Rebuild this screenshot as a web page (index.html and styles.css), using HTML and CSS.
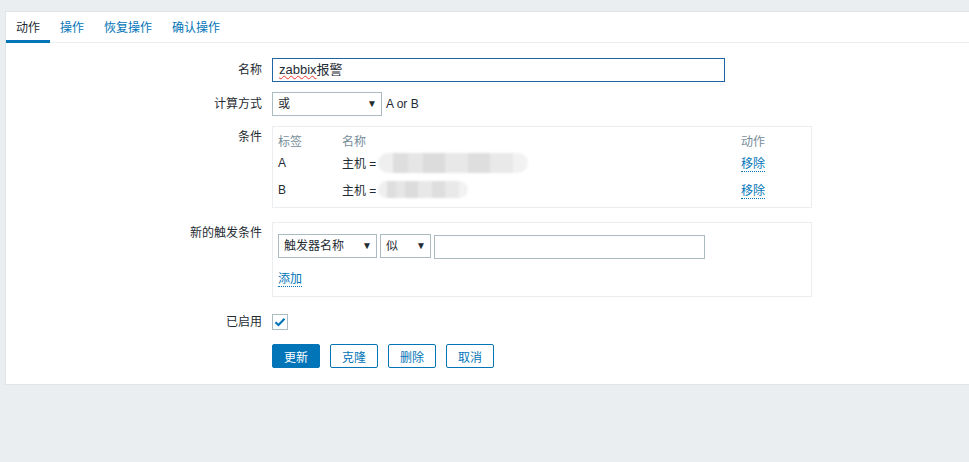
FILE: index.html
```html
<!DOCTYPE html>
<html lang="zh">
<head>
<meta charset="utf-8">
<title>动作</title>
<link rel="stylesheet" href="styles.css">
</head>
<body>
<div class="panel">
  <ul class="tabs">
    <li class="tab active">动作</li>
    <li class="tab">操作</li>
    <li class="tab">恢复操作</li>
    <li class="tab">确认操作</li>
  </ul>
  <div class="form">
    <div class="label">名称</div>
    <div class="field"><div class="input focused"><span class="spell">zabbix</span>报警</div></div>

    <div class="label">计算方式</div>
    <div class="field inline">
      <div class="select calc">或<span class="arrow">▼</span></div>
      <span class="hint">A or B</span>
    </div>

    <div class="label top">条件</div>
    <div class="field">
      <div class="box cond">
        <div class="trow head"><span class="c1">标签</span><span class="c2">名称</span><span class="c3">动作</span></div>
        <div class="trow"><span class="c1">A</span><span class="c2">主机 = <span class="blur wide"></span></span><span class="c3"><span class="link">移除</span></span></div>
        <div class="trow"><span class="c1">B</span><span class="c2">主机 = <span class="blur narrow"></span></span><span class="c3"><span class="link">移除</span></span></div>
      </div>
    </div>

    <div class="label top gap15">新的触发条件</div>
    <div class="field gap15">
      <div class="box trig">
        <div class="inline">
          <div class="select tname">触发器名称<span class="arrow">▼</span></div>
          <div class="select op">似<span class="arrow">▼</span></div>
          <div class="input value"></div>
        </div>
        <div class="addrow"><span class="link">添加</span></div>
      </div>
    </div>

    <div class="label gap13">已启用</div>
    <div class="field gap13">
      <div class="checkbox"><svg width="12" height="10" viewBox="0 0 12 10"><path d="M1.5 5.2 L4.5 8 L10.5 1.8" fill="none" stroke="#0275b8" stroke-width="2.2"/></svg></div>
    </div>

    <div class="label gap11"></div>
    <div class="field buttons gap11">
      <button class="btn primary">更新</button>
      <button class="btn">克隆</button>
      <button class="btn">删除</button>
      <button class="btn">取消</button>
    </div>
  </div>
</div>
</body>
</html>
```
FILE: styles.css
```css
html, body {
  margin: 0;
  padding: 0;
  overflow: hidden;
  background: #ebeef0;
}
body {
  font-family: "Liberation Sans", Arial, "Noto Sans CJK SC", sans-serif;
  font-size: 12px;
  color: #1f2c33;
  padding-top: 11px;
}
.panel {
  margin-left: 5px;
  width: 980px;
  height: 372px;
  background: #fff;
  border: 1px solid #dfe4e7;
}
.tabs {
  list-style: none;
  margin: 0;
  padding: 0;
  height: 30px;
  display: flex;
  border-bottom: 1px solid #ebeef0;
}
.tab {
  height: 31px;
  box-sizing: border-box;
  padding: 6px 10px 0;
  color: #0275b8;
  border-bottom: 3px solid transparent;
}
.tab.active {
  color: #1f2c33;
  border-bottom-color: #0275b8;
}
.form {
  display: grid;
  grid-template-columns: 256px 1fr;
  column-gap: 10px;
  row-gap: 10px;
  padding-top: 15px;
}
.label {
  text-align: right;
  line-height: 24px;
}
.label.top { line-height: 22px; }
.gap15 { margin-top: 4px; }
.gap13 { margin-top: 3px; }
.gap11 { margin-top: 0; }
.field { min-height: 24px; }
.inline {
  display: flex;
  align-items: center;
}
.input {
  box-sizing: border-box;
  height: 24px;
  border: 1px solid #acbbc2;
  padding: 0 6px;
  line-height: 22px;
  font-size: 13px;
  background: #fff;
}
.input.focused {
  width: 453px;
  border-color: #1f65a6;
}
.spell {
  text-decoration: underline wavy #e33;
  text-decoration-thickness: 1px;
}
.select {
  position: relative;
  box-sizing: border-box;
  height: 24px;
  border: 1px solid #acbbc2;
  padding: 0 5px;
  line-height: 22px;
  font-size: 12px;
}
.arrow {
  position: absolute;
  right: 4px;
  top: 0;
  font-size: 10px;
  color: #1f2c33;
}
.select.calc { width: 110px; }
.hint { margin-left: 4px; }
.box {
  box-sizing: border-box;
  width: 540px;
  border: 1px solid #ebeef0;
}
.cond {
  height: 82px;
  padding: 4px 5px 0;
}
.trow {
  display: flex;
  height: 27px;
  align-items: center;
}
.trow.head {
  height: 18px;
  color: #768d99;
}
.c1 { width: 64px; flex: none; }
.c2 { width: 399px; flex: none; display: flex; align-items: center; }
.c3 { flex: 1; }
.link {
  color: #0275b8;
  border-bottom: 1px dotted #0275b8;
}
.blur {
  display: inline-block;
  height: 20px;
  margin-left: 2px;
  border-radius: 10px;
  filter: blur(1.2px);
  background: linear-gradient(90deg, #efefef 0 10%, #dedede 10% 20%, #e6e6e6 20% 30%, #dcdcdc 30% 45%, #e8e8e8 45% 60%, #dedede 60% 75%, #e9e9e9 75% 90%, #f2f2f2 90% 100%);
}
.blur.wide { width: 150px; }
.blur.narrow { width: 90px; height: 17px; }
.trig {
  height: 75px;
  padding: 10px 5px 0;
}
.select.tname { width: 99px; }
.select.op { width: 51px; margin-left: 3px; }
.input.value { width: 271px; margin-left: 3px; margin-top: 2px; }
.addrow {
  margin-top: 12px;
  line-height: 16px;
}
.checkbox {
  box-sizing: border-box;
  width: 16px;
  height: 16px;
  margin-top: 4px;
  border: 1px solid #acbbc2;
  display: flex;
  align-items: center;
  justify-content: center;
}
.buttons {
  display: flex;
  gap: 10px;
}
.btn {
  box-sizing: border-box;
  width: 48px;
  height: 24px;
  padding: 0;
  border: 1px solid #0275b8;
  border-radius: 2px;
  background: #fff;
  color: #0275b8;
  font-family: inherit;
  font-size: 12px;
}
.btn.primary {
  background: #0275b8;
  color: #fff;
}
```
